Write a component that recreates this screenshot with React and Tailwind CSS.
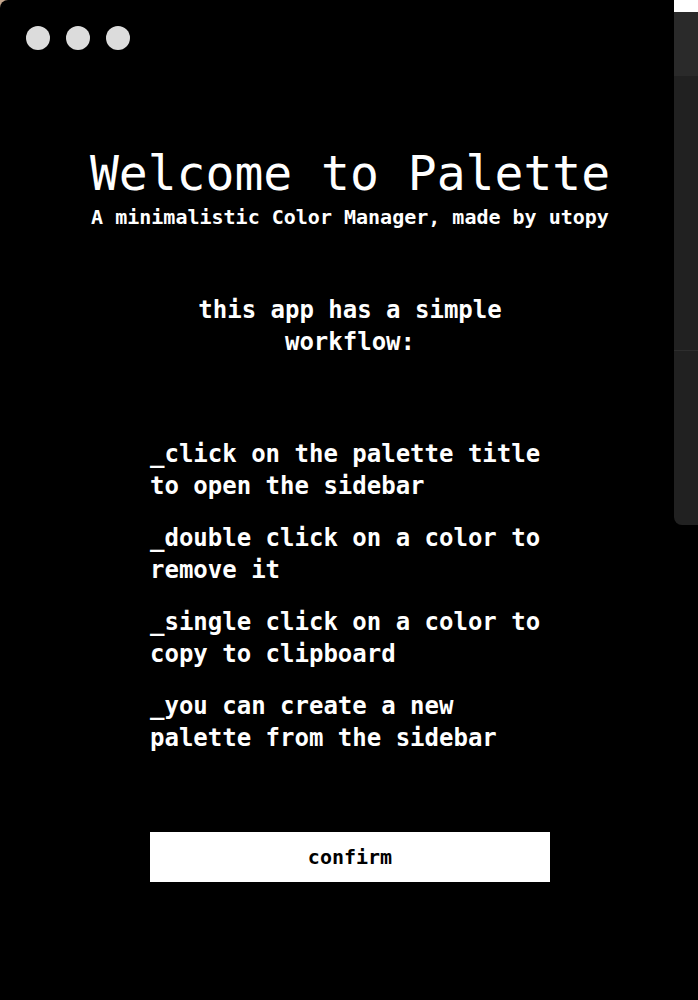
import React from 'react';

const steps = [
  '_click on the palette title to open the sidebar',
  '_double click on a color to remove it',
  '_single click on a color to copy to clipboard',
  '_you can create a new palette from the sidebar',
];

export default function App() {
  return (
    <div className="relative w-[698px] h-[1000px] bg-[#c4a68c] overflow-hidden">
      <div
        className="h-full w-full bg-black rounded-tl-[8px] text-white flex flex-col"
        style={{ fontFamily: '"DejaVu Sans Mono", "Liberation Mono", monospace' }}
      >
        {/* window controls */}
        <div className="flex gap-4 pl-[26px] pt-[26px]">
          <span className="w-6 h-6 rounded-full bg-[#dcdcdc]" />
          <span className="w-6 h-6 rounded-full bg-[#dcdcdc]" />
          <span className="w-6 h-6 rounded-full bg-[#dcdcdc]" />
        </div>

        <h1 className="mt-[95px] pl-[2px] text-center text-[48px] leading-[56px] font-normal">
          Welcome to Palette
        </h1>
        <p className="mt-1 pl-[2px] text-center text-[20px] leading-[24px] font-bold">
          A minimalistic Color Manager, made by utopy
        </p>

        <p className="mt-[65px] ml-[150px] w-[400px] text-center text-[24px] leading-[32px] font-bold">
          this app has a simple workflow:
        </p>

        <ul className="mt-[80px] ml-[150px] w-[400px] flex flex-col gap-5">
          {steps.map((s) => (
            <li key={s} className="text-[24px] leading-[32px] font-bold">
              {s}
            </li>
          ))}
        </ul>

        <button className="mt-[78px] ml-[150px] w-[400px] h-[50px] bg-white text-black text-[20px] font-bold">
          confirm
        </button>
      </div>

      {/* sidebar peeking in from behind */}
      <div className="absolute top-0 left-[674px] w-[24px] flex flex-col">
        <div className="h-[12px] bg-white" />
        <div className="h-[64px] bg-[#2a2a2a]" />
        <div className="h-[275px] bg-[#212121] border-b border-[#2e2e2e]" />
        <div className="h-[174px] bg-[#212121] rounded-bl-[8px]" />
      </div>
    </div>
  );
}
